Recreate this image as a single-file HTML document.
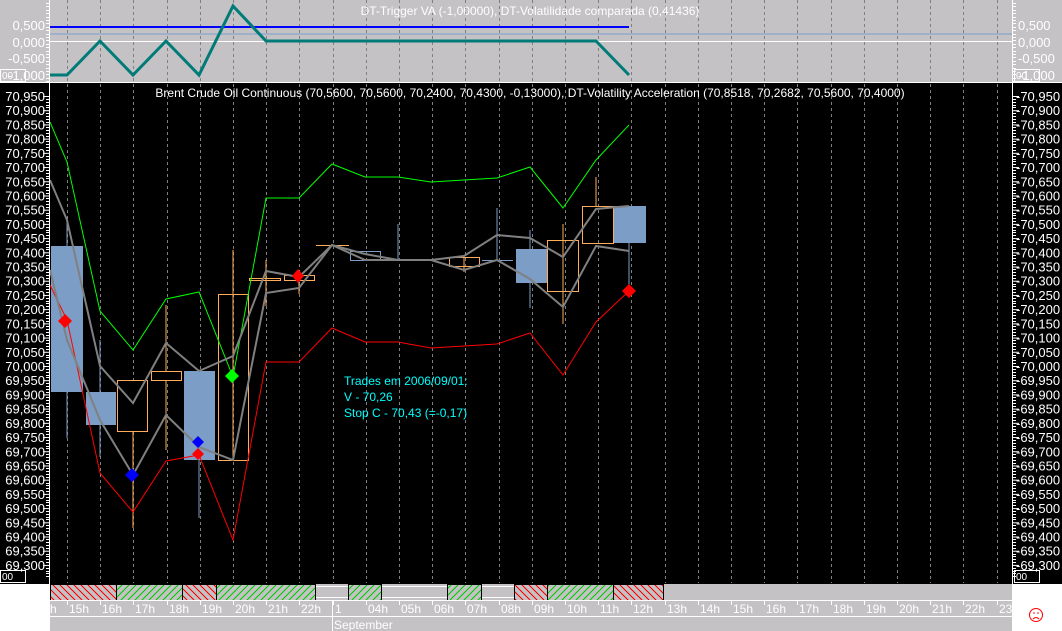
<!DOCTYPE html>
<html><head><meta charset="utf-8"><style>
html,body{margin:0;padding:0;background:#fff;width:1062px;height:631px;overflow:hidden}
svg{display:block;font-family:"Liberation Sans",sans-serif}
</style></head><body>
<svg id="s" width="1062" height="631" viewBox="0 0 1062 631" xmlns="http://www.w3.org/2000/svg">
<defs>
<pattern id="hr" width="7" height="7" patternUnits="userSpaceOnUse"><rect width="7" height="7" fill="#c4c2c4"/><path d="M0 0L7 7M-4 3L3 10M3 -4L10 3" stroke="#f00" stroke-width="1" shape-rendering="crispEdges"/></pattern>
<pattern id="hg" width="7" height="7" patternUnits="userSpaceOnUse"><rect width="7" height="7" fill="#c4c2c4"/><path d="M0 7L7 0M-4 4L3 -3M3 11L10 4" stroke="#0c0" stroke-width="1" shape-rendering="crispEdges"/></pattern>
</defs>
<rect x="0" y="0" width="1062" height="83" fill="#c4c2c4"/>
<rect x="0" y="83" width="1062" height="501" fill="#000"/>
<rect x="50" y="584" width="962" height="47" fill="#c4c2c4"/>
<g id="grid"></g>
<line x1="50" y1="27" x2="629" y2="27" stroke="#0000ff" stroke-width="2"/>
<line x1="50" y1="34" x2="1012" y2="34" stroke="#7aa0d0" stroke-width="1"/>
<line x1="50" y1="41.5" x2="1012" y2="41.5" stroke="#fff" stroke-width="1"/>
<polyline points="50,75 67,75 100,41 133,75 166,41 199,75 233,6 266,41 596,41 629,75" fill="none" stroke="#007b78" stroke-width="3"/>
<text x="530" y="15" fill="#fff" font-size="12" text-anchor="middle">DT-Trigger VA (-1,00000), DT-Volatilidade comparada (0,41436)</text>
<line x1="0" y1="82.5" x2="1062" y2="82.5" stroke="#fff"/>
<text x="530" y="97" fill="#fff" font-size="12" text-anchor="middle">Brent Crude Oil Continuous (70,5600, 70,5600, 70,2400, 70,4300, -0,13000), DT-Volatility Acceleration (70,8518, 70,2682, 70,5600, 70,4000)</text>
<g stroke-width="1">
<line x1="67" y1="218" x2="67" y2="438" stroke="#7b9dc6"/>
<line x1="100" y1="340" x2="100" y2="457" stroke="#7b9dc6"/>
<line x1="133" y1="380" x2="133" y2="528" stroke="#ffad5a"/>
<line x1="166" y1="305" x2="166" y2="450" stroke="#ffad5a"/>
<line x1="199" y1="371" x2="199" y2="518" stroke="#7b9dc6"/>
<line x1="233" y1="250" x2="233" y2="460" stroke="#ffad5a"/>
<line x1="266" y1="260" x2="266" y2="306" stroke="#ffad5a"/>
<line x1="299" y1="270" x2="299" y2="294" stroke="#ffad5a"/>
<line x1="398" y1="224" x2="398" y2="260" stroke="#7b9dc6"/>
<line x1="464" y1="257" x2="464" y2="272" stroke="#ffad5a"/>
<line x1="497" y1="208" x2="497" y2="260" stroke="#7b9dc6"/>
<line x1="530" y1="230" x2="530" y2="308" stroke="#7b9dc6"/>
<line x1="563" y1="224" x2="563" y2="324" stroke="#ffad5a"/>
<line x1="596" y1="177" x2="596" y2="206" stroke="#ffad5a"/>
<line x1="629" y1="243" x2="629" y2="291" stroke="#7b9dc6"/>
</g>
<g>
<rect x="51" y="246" width="32" height="146" fill="#7b9dc6"/>
<rect x="86" y="392" width="30" height="33" fill="#7b9dc6"/>
<rect x="117.5" y="380.5" width="30" height="51" fill="#000" stroke="#ffad5a"/>
<rect x="151.5" y="371.5" width="30" height="9" fill="#000" stroke="#ffad5a"/>
<rect x="184" y="371" width="31" height="89" fill="#7b9dc6"/>
<rect x="218.5" y="294.5" width="30" height="166" fill="none" stroke="#ffad5a"/>
<rect x="249.5" y="278.5" width="31" height="2" fill="none" stroke="#ffad5a"/>
<rect x="284.5" y="275.5" width="30" height="5" fill="none" stroke="#ffad5a"/>
<line x1="316" y1="245.5" x2="349" y2="245.5" stroke="#ffad5a"/>
<rect x="350.5" y="251.5" width="30" height="9" fill="none" stroke="#7b9dc6"/>
<line x1="383" y1="260.5" x2="413" y2="260.5" stroke="#7b9dc6"/>
<rect x="449.5" y="257.5" width="30" height="9" fill="none" stroke="#ffad5a"/>
<line x1="482" y1="260.5" x2="513" y2="260.5" stroke="#7b9dc6"/>
<rect x="516" y="249" width="31" height="34" fill="#7b9dc6"/>
<rect x="547.5" y="240.5" width="31" height="51" fill="none" stroke="#ffad5a"/>
<rect x="582.5" y="206.5" width="31" height="37" fill="none" stroke="#ffad5a"/>
<rect x="614" y="206" width="32" height="37" fill="#7b9dc6"/>
</g>
<polyline points="50,122 67,162 100,311 133,350 166,299 199,292 233,377 266,198 299,198 332,164 365,177 398,177 431,182 464,180 497,178 530,167 563,208 596,160 629,125" fill="none" stroke="#0f0" stroke-width="1"/>
<polyline points="50,285 67,320 100,473 133,512 166,461 199,455 233,540 266,362 299,362 332,328 365,342 398,342 431,348 464,346 497,344 530,333 563,375 596,322 629,291" fill="none" stroke="#f00" stroke-width="1"/>
<polyline points="50,180 67,220 100,366 133,403 166,343 199,371 233,356 266,271 299,277 332,245 365,260 398,260 431,260 464,256 497,235 530,238 563,257 596,209 629,206" fill="none" stroke="#808080" stroke-width="2"/>
<polyline points="50,270 67,340 100,420 133,475 166,415 199,447 233,460 266,293 299,288 332,245 365,254 398,260 431,260 464,270 497,260 530,279 563,307 596,246 629,251" fill="none" stroke="#808080" stroke-width="2"/>
<g>
<path d="M65 314l7 7-7 7-7-7z" fill="#f00"/>
<path d="M132 468l7 7-7 7-7-7z" fill="#00f"/>
<path d="M198 436l6 6-6 6-6-6z" fill="#00f"/>
<path d="M198 448l6 6-6 6-6-6z" fill="#f00"/>
<path d="M232 369l7 7-7 7-7-7z" fill="#0f0"/>
<path d="M298 269l6 7-6 7-6-7z" fill="#f00"/>
<path d="M629 284l7 7-7 7-7-7z" fill="#f00"/>
</g>
<g fill="#00ffff" font-size="12">
<text x="344" y="385">Trades em 2006/09/01:</text>
<text x="344" y="401">V - 70,26</text>
<text x="344" y="417">Stop C - 70,43 (=-0,17)</text>
</g>
<g stroke="#000" stroke-width="1">
<rect x="50.5" y="584.5" width="66" height="16" fill="url(#hr)"/>
<rect x="116.5" y="584.5" width="66" height="16" fill="url(#hg)"/>
<rect x="182.5" y="584.5" width="34" height="16" fill="url(#hr)"/>
<rect x="216.5" y="584.5" width="99" height="16" fill="url(#hg)"/>
<rect x="348.5" y="584.5" width="33" height="16" fill="url(#hg)"/>
<rect x="447.5" y="584.5" width="34" height="16" fill="url(#hg)"/>
<rect x="514.5" y="584.5" width="33" height="16" fill="url(#hr)"/>
<rect x="547.5" y="584.5" width="66" height="16" fill="url(#hg)"/>
<rect x="613.5" y="584.5" width="50" height="16" fill="url(#hr)"/>
</g>
<g stroke="#fff">
<line x1="316" y1="586.5" x2="348" y2="586.5"/><line x1="316" y1="597.5" x2="348" y2="597.5"/>
<line x1="382" y1="586.5" x2="447" y2="586.5"/><line x1="382" y1="597.5" x2="447" y2="597.5"/>
<line x1="482" y1="586.5" x2="514" y2="586.5"/><line x1="482" y1="597.5" x2="514" y2="597.5"/>
<line x1="50" y1="600.5" x2="1012" y2="600.5"/>
<line x1="50" y1="616.5" x2="1012" y2="616.5"/>
<line x1="332.5" y1="600" x2="332.5" y2="631"/>
</g>
<text x="334" y="629" fill="#fff" font-size="12">September</text>
<g id="tl" fill="#fff" font-size="12"></g>
<g id="ax" fill="#fff" font-size="13"></g>
<rect x="0.5" y="69.5" width="25" height="12" fill="none" stroke="#fff"/><text x="2" y="79" fill="#fff" font-size="10">00</text>
<rect x="1014.5" y="69.5" width="25" height="12" fill="none" stroke="#fff"/><text x="1016" y="79" fill="#fff" font-size="10">00</text>
<rect x="0.5" y="570.5" width="25" height="12" fill="none" stroke="#fff"/><text x="2" y="580" fill="#fff" font-size="10">00</text>
<rect x="1014.5" y="570.5" width="25" height="12" fill="none" stroke="#fff"/><text x="1016" y="580" fill="#fff" font-size="10">00</text>
<circle cx="1036" cy="615" r="6.5" fill="none" stroke="#f00"/>
<circle cx="1034" cy="613" r="0.8" fill="#f00"/><circle cx="1038" cy="613" r="0.8" fill="#f00"/>
<path d="M1033 619q3-3 6 0" fill="none" stroke="#f00"/>
</svg>
<script>
var NS="http://www.w3.org/2000/svg";
function el(p,t,a,txt){var e=document.createElementNS(NS,t);for(var k in a)e.setAttribute(k,a[k]);if(txt)e.textContent=txt;document.getElementById(p).appendChild(e);return e;}
for(var i=0;i<29;i++){var x=67+i*33.2;x=Math.round(x)+0.5;
 el("grid","line",{x1:x,y1:0,x2:x,y2:583,stroke:"#808080","stroke-dasharray":"3,3"});}
var lab=["15h","16h","17h","18h","19h","20h","21h","22h","1","04h","05h","06h","07h","08h","09h","10h","11h","12h","13h","14h","15h","16h","17h","18h","19h","20h","21h","22h","23"];
el("tl","text",{x:50,y:613},"h");
for(var i=0;i<lab.length;i++){var x=Math.round(67+i*33.2);
 el("tl","line",{x1:x+0.5,y1:600,x2:x+0.5,y2:605,stroke:"#fff"});
 el("tl","text",{x:x+2,y:613},lab[i]);}
el("ax","line",{x1:49.5,y1:0,x2:49.5,y2:584,stroke:"#fff"});
el("ax","line",{x1:1012.5,y1:0,x2:1012.5,y2:584,stroke:"#fff"});
for(var k=0;k<34;k++){var p=70.95-k*0.05;var y=96+k*14.21;
 var s=p.toFixed(3).replace(".",",");
 el("ax","text",{x:45,y:y+5,"text-anchor":"end"},s);
 el("ax","text",{x:1016,y:y+5},"-"+s);
 el("ax","line",{x1:43,y1:y+0.5,x2:49,y2:y+0.5,stroke:"#fff"});
 el("ax","line",{x1:1013,y1:y+0.5,x2:1019,y2:y+0.5,stroke:"#fff"});
 for(var m=1;m<5;m++){var yy=Math.round(y+m*2.84)+0.5;
  el("ax","line",{x1:46,y1:yy,x2:49,y2:yy,stroke:"#fff"});
  el("ax","line",{x1:1013,y1:yy,x2:1016,y2:yy,stroke:"#fff"});}}
var tlabs=[["0,500",25],["0,000",42],["-0,500",58],["-1,000",75]];
for(var i=0;i<tlabs.length;i++){
 el("ax","text",{x:45,y:tlabs[i][1]+5,"text-anchor":"end"},tlabs[i][0]);
 el("ax","text",{x:1018,y:tlabs[i][1]+5},tlabs[i][0]);}
for(var y=3;y<82;y+=3.4){var yy=Math.round(y)+0.5;
 el("ax","line",{x1:46,y1:yy,x2:49,y2:yy,stroke:"#fff"});
 el("ax","line",{x1:1013,y1:yy,x2:1016,y2:yy,stroke:"#fff"});}
</script>
</body></html>
